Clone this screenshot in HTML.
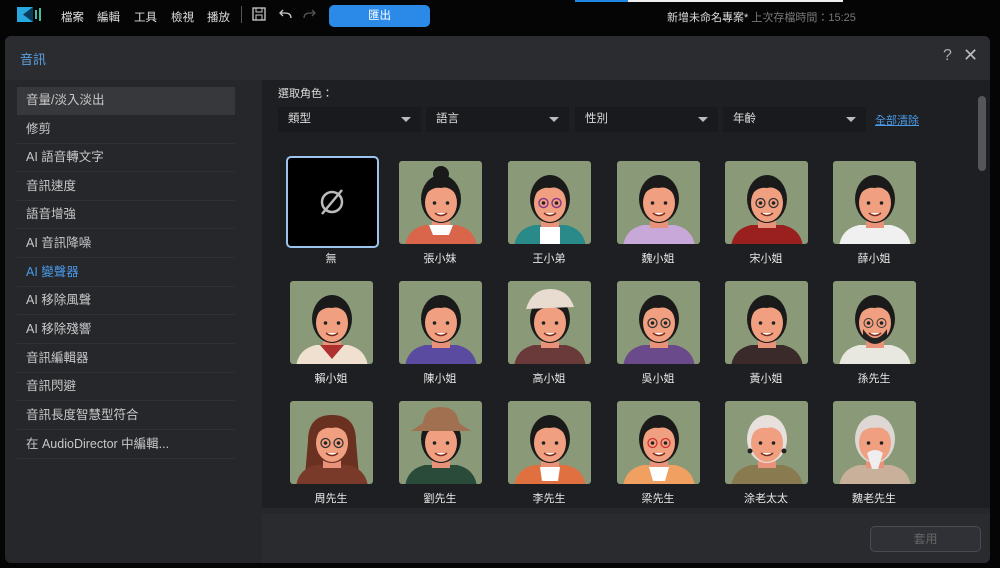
<!DOCTYPE html>
<html><head><meta charset="utf-8"><style>
*{margin:0;padding:0;box-sizing:border-box}
body{width:1000px;height:568px;background:#050506;font-family:"Liberation Sans","Noto Sans CJK TC",sans-serif;color:#ddd;position:relative;overflow:hidden;font-size:12px}
.a{position:absolute}
.menu span{position:absolute;top:9px;font-size:11.5px;color:#ddd}
.dlg{left:5px;top:36px;width:985px;height:527px;background:#26272b;border-radius:6px;overflow:hidden}
.li{position:absolute;left:12px;width:218px;height:28px;line-height:27px;padding-left:9px;font-size:12.5px;color:#c8c8c8;border-bottom:1px solid #303135}
.sel{background:#8a9a78;border-radius:3px;width:83px;height:83px;overflow:hidden}
.lbl{position:absolute;width:108px;text-align:center;font-size:11px;color:#e8e8e8}
.dd{position:absolute;top:71px;height:25px;background:#191a1d;font-size:11.5px;color:#ddd;line-height:25px;padding-left:10px}
.dd i{position:absolute;right:10px;top:10px;border-left:5px solid transparent;border-right:5px solid transparent;border-top:5px solid #bbb}
</style></head><body>
<svg width="0" height="0" style="position:absolute"><defs>
<g id="f">
<path d="M6 86 Q8 68 26 64 L58 64 Q76 68 78 86Z" fill="var(--s,#d9664a)"/>
<rect x="33" y="52" width="18" height="15" fill="#e9927a"/>
<ellipse cx="42" cy="38" rx="20" ry="24" fill="var(--h,#1a1a1a)"/>
<ellipse cx="42" cy="42" rx="16" ry="19" fill="#f0a080"/>
<path d="M24 38 Q26 16 42 17 Q58 16 60 38 Q52 24 42 27 Q31 25 24 38Z" fill="var(--h,#1a1a1a)"/>
<circle cx="35.5" cy="42" r="1.8" fill="#222"/><circle cx="48.5" cy="42" r="1.8" fill="#222"/>
<path d="M36 52 Q42 57 48 52" stroke="#7a2a1a" stroke-width="1.5" fill="#fff"/>
</g></defs></svg>

<!-- top bar -->
<div class="a" style="left:17px;top:6px;width:28px;height:17px">
<svg width="28" height="17"><rect x="0" y="1" width="16" height="15" fill="#27a8e0"/><path d="M16 1 L6 8.5 L16 16Z" fill="#0a3c5c"/><rect x="18" y="4" width="2" height="9" fill="#3ec0a0"/><rect x="22" y="2" width="2" height="13" fill="#3ec0a0"/></svg></div>
<div class="menu"><span style="left:61px">檔案</span><span style="left:97px">編輯</span><span style="left:134px">工具</span><span style="left:171px">檢視</span><span style="left:207px">播放</span></div>
<div class="a" style="left:241px;top:6px;width:1px;height:17px;background:#555"></div>
<svg class="a" style="left:252px;top:7px" width="14" height="14"><rect x="1" y="1" width="12" height="12" fill="none" stroke="#ccc" stroke-width="1.3"/><rect x="4" y="1" width="6" height="4" fill="none" stroke="#ccc"/><rect x="4" y="8" width="6" height="5" fill="none" stroke="#ccc"/></svg>
<svg class="a" style="left:278px;top:9px" width="14" height="10"><path d="M13 9 Q13 4 7 4 L2 4 M5 1 L2 4 L5 7" fill="none" stroke="#ccc" stroke-width="1.3"/></svg>
<svg class="a" style="left:303px;top:9px" width="14" height="10"><path d="M1 9 Q1 4 7 4 L12 4 M9 1 L12 4 L9 7" fill="none" stroke="#555" stroke-width="1.3"/></svg>
<div class="a" style="left:329px;top:5px;width:101px;height:22px;background:#2b8ae8;border-radius:5px;text-align:center;line-height:22px;font-size:11.5px;color:#fff">匯出</div>
<div class="a" style="left:575px;top:0;width:53px;height:2px;background:#1e88e5"></div>
<div class="a" style="left:628px;top:0;width:215px;height:2px;background:#eee"></div>
<div class="a" style="left:667px;top:9px;font-size:11px;color:#ddd;white-space:nowrap">新增未命名專案* <span style="color:#777">上次存檔時間：15:25</span></div>

<div class="a dlg">
 <div class="a" style="left:0;top:0;width:985px;height:44px;background:#2b2c30"></div>
 <div class="a" style="left:15px;top:13px;font-size:13px;color:#5aa0e0">音訊</div>
 <div class="a" style="left:938px;top:11px;font-size:16px;color:#aaa">?</div>
 <div class="a" style="left:958px;top:9px;font-size:18px;color:#bbb">✕</div>

 <div class="li" style="top:51px;background:#37383c;border-bottom:none">音量/淡入淡出</div>
 <div class="li" style="top:80px">修剪</div>
 <div class="li" style="top:108px">AI 語音轉文字</div>
 <div class="li" style="top:137px">音訊速度</div>
 <div class="li" style="top:165px">語音增強</div>
 <div class="li" style="top:194px">AI 音訊降噪</div>
 <div class="li" style="top:223px;color:#4a9ae8">AI 變聲器</div>
 <div class="li" style="top:251px">AI 移除風聲</div>
 <div class="li" style="top:280px">AI 移除殘響</div>
 <div class="li" style="top:309px">音訊編輯器</div>
 <div class="li" style="top:337px">音訊閃避</div>
 <div class="li" style="top:366px">音訊長度智慧型符合</div>
 <div class="li" style="top:395px">在 AudioDirector 中編輯...</div>

 <div class="a" style="left:257px;top:44px;width:728px;height:428px;background:#1e1f22"></div>
 <div class="a" style="left:257px;top:478px;width:728px;height:49px;background:#2a2b2f"></div>
 <div class="a" style="left:865px;top:490px;width:111px;height:26px;border:1px solid #4a4b50;border-radius:5px;background:#303136;color:#666;text-align:center;line-height:24px;font-size:12px">套用</div>
 <div class="a" style="left:973px;top:60px;width:8px;height:75px;background:#55565a;border-radius:4px"></div>

 <div class="a" style="left:273px;top:49px;font-size:11px;color:#ddd">選取角色：</div>
 <div class="dd" style="left:273px;width:143px">類型<i></i></div>
 <div class="dd" style="left:421px;width:143px">語言<i></i></div>
 <div class="dd" style="left:570px;width:143px">性別<i></i></div>
 <div class="dd" style="left:718px;width:143px">年齡<i></i></div>
 <div class="a" style="left:870px;top:76px;font-size:11px;color:#4a9ae8;text-decoration:underline">全部清除</div>

 <div class="a" style="left:281px;top:120px;width:93px;height:92px;border:2px solid #9cc4ee;border-radius:5px;background:#000"></div>
 <svg class="a" style="left:313px;top:151px" width="28" height="30"><circle cx="14" cy="15" r="10" fill="none" stroke="#bbb" stroke-width="2.5"/><path d="M4 27 L24 3" stroke="#bbb" stroke-width="2.5"/></svg>
</div>

<div class="a sel" style="left:399px;top:161px;--s:#d9664a"><svg width="83" height="83"><use href="#f"/><circle cx="42" cy="13" r="8" fill="#1a1a1a"/><path d="M30 64 L54 64 L50 74 L34 74Z" fill="#fff"/></svg></div>
<div class="a sel" style="left:508px;top:161px;--s:#2a8a8a"><svg width="83" height="83"><use href="#f"/><path d="M32 66 L52 66 L52 86 L32 86Z" fill="#fff"/><circle cx="35.5" cy="42" r="4.5" fill="none" stroke="#8a3a8a" stroke-width="1.5"/><circle cx="48.5" cy="42" r="4.5" fill="none" stroke="#8a3a8a" stroke-width="1.5"/></svg></div>
<div class="a sel" style="left:617px;top:161px;--s:#c8a8d8"><svg width="83" height="83"><use href="#f"/></svg></div>
<div class="a sel" style="left:725px;top:161px;--s:#9a2020"><svg width="83" height="83"><use href="#f"/><circle cx="35.5" cy="42" r="4.5" fill="none" stroke="#333" stroke-width="1.3"/><circle cx="48.5" cy="42" r="4.5" fill="none" stroke="#333" stroke-width="1.3"/></svg></div>
<div class="a sel" style="left:833px;top:161px;--s:#f0f0f0"><svg width="83" height="83"><use href="#f"/></svg></div>

<div class="a sel" style="left:290px;top:281px;--s:#f0e0d0"><svg width="83" height="83"><use href="#f"/><path d="M30 64 L54 64 L42 78Z" fill="#b03030"/></svg></div>
<div class="a sel" style="left:399px;top:281px;--s:#5a4aa0"><svg width="83" height="83"><use href="#f"/></svg></div>
<div class="a sel" style="left:508px;top:281px;--s:#6a3a3a"><svg width="83" height="83"><use href="#f"/><path d="M18 28 Q24 8 42 8 Q60 8 66 26 Z" fill="#e8dcd0"/></svg></div>
<div class="a sel" style="left:617px;top:281px;--s:#6a4a8a"><svg width="83" height="83"><use href="#f"/><circle cx="35.5" cy="42" r="4.5" fill="none" stroke="#333" stroke-width="1.3"/><circle cx="48.5" cy="42" r="4.5" fill="none" stroke="#333" stroke-width="1.3"/></svg></div>
<div class="a sel" style="left:725px;top:281px;--s:#3a2a2a"><svg width="83" height="83"><use href="#f"/></svg></div>
<div class="a sel" style="left:833px;top:281px;--s:#e8e8e0"><svg width="83" height="83"><use href="#f"/><path d="M30 48 Q42 66 54 48 L54 56 Q42 70 30 56Z" fill="#222"/><circle cx="35.5" cy="42" r="4.5" fill="none" stroke="#333"/><circle cx="48.5" cy="42" r="4.5" fill="none" stroke="#333"/></svg></div>

<div class="a sel" style="left:290px;top:401px;--s:#7a3a2a;--h:#6a3020"><svg width="83" height="83"><path d="M18 40 Q18 14 42 14 Q66 14 66 40 L70 86 L14 86Z" fill="#6a3020"/><use href="#f"/><circle cx="35.5" cy="42" r="4.5" fill="none" stroke="#333" stroke-width="1.3"/><circle cx="48.5" cy="42" r="4.5" fill="none" stroke="#333" stroke-width="1.3"/></svg></div>
<div class="a sel" style="left:399px;top:401px;--s:#2a4a3a"><svg width="83" height="83"><use href="#f"/><path d="M12 30 L72 30 L60 22 Q58 6 42 6 Q26 6 24 22Z" fill="#a07050"/></svg></div>
<div class="a sel" style="left:508px;top:401px;--s:#e07040"><svg width="83" height="83"><use href="#f"/><path d="M32 66 L52 66 L50 80 L34 80Z" fill="#fff"/></svg></div>
<div class="a sel" style="left:617px;top:401px;--s:#f0a060"><svg width="83" height="83"><use href="#f"/><path d="M32 66 L52 66 L48 80 L36 80Z" fill="#fff"/><circle cx="35.5" cy="42" r="4.5" fill="none" stroke="#c33" stroke-width="1.3"/><circle cx="48.5" cy="42" r="4.5" fill="none" stroke="#c33" stroke-width="1.3"/></svg></div>
<div class="a sel" style="left:725px;top:401px;--s:#8a7a50;--h:#e8e0dc"><svg width="83" height="83"><use href="#f"/><circle cx="25" cy="50" r="2.5" fill="#222"/><circle cx="59" cy="50" r="2.5" fill="#222"/></svg></div>
<div class="a sel" style="left:833px;top:401px;--s:#c8b09a;--h:#ddd8d4"><svg width="83" height="83"><use href="#f"/><path d="M34 52 Q42 46 50 52 L45 68 L39 68Z" fill="#eee"/></svg></div>

<div class="lbl" style="left:277px;top:250px">無</div>
<div class="lbl" style="left:386px;top:250px">張小妹</div>
<div class="lbl" style="left:495px;top:250px">王小弟</div>
<div class="lbl" style="left:604px;top:250px">魏小姐</div>
<div class="lbl" style="left:712px;top:250px">宋小姐</div>
<div class="lbl" style="left:820px;top:250px">薛小姐</div>
<div class="lbl" style="left:277px;top:370px">賴小姐</div>
<div class="lbl" style="left:386px;top:370px">陳小姐</div>
<div class="lbl" style="left:495px;top:370px">高小姐</div>
<div class="lbl" style="left:604px;top:370px">吳小姐</div>
<div class="lbl" style="left:712px;top:370px">黃小姐</div>
<div class="lbl" style="left:820px;top:370px">孫先生</div>
<div class="lbl" style="left:277px;top:490px">周先生</div>
<div class="lbl" style="left:386px;top:490px">劉先生</div>
<div class="lbl" style="left:495px;top:490px">李先生</div>
<div class="lbl" style="left:604px;top:490px">梁先生</div>
<div class="lbl" style="left:712px;top:490px">涂老太太</div>
<div class="lbl" style="left:820px;top:490px">魏老先生</div>
</body></html>
